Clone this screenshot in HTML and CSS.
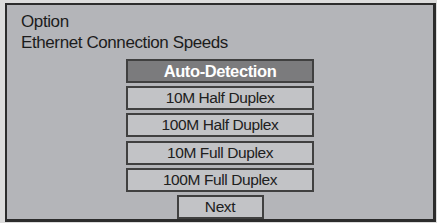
FILE: index.html
```html
<!DOCTYPE html>
<html lang="en">
<head>
    <meta charset="UTF-8">
    <title>Option - Ethernet Connection Speeds</title>
    <link rel="stylesheet" href="styles.css">
</head>
<body>
    <div class="panel">
        <div class="title">Option</div>
        <div class="title">Ethernet Connection Speeds</div>
        <div class="options">
            <div class="option selected">Auto-Detection</div>
            <div class="option">10M Half Duplex</div>
            <div class="option">100M Half Duplex</div>
            <div class="option">10M Full Duplex</div>
            <div class="option">100M Full Duplex</div>
            <div class="option next">Next</div>
        </div>
    </div>
</body>
</html>
```

FILE: styles.css
```css
body {
    margin: 0;
    padding: 3px 0 0 5px;
    background-color: #dcdcdc;
    font-family: "Liberation Sans", Arial, sans-serif;
}
.panel {
    box-sizing: border-box;
    width: 431px;
    height: 219px;
    padding: 6px 0 0 14px;
    background-color: #b4b5b9;
    border: 2px solid #2c2c2c;
    border-right-width: 3px;
    border-bottom-width: 3px;
}
.title {
    font-size: 17px;
    line-height: 21px;
    letter-spacing: -0.4px;
    color: #1c1c1c;
}
.options {
    display: flex;
    flex-direction: column;
    align-items: center;
    gap: 3.2px;
    margin: 6px 0 0 -14px;
}
.option {
    box-sizing: border-box;
    width: 188px;
    height: 24px;
    line-height: 20px;
    text-align: center;
    font-size: 15.5px;
    letter-spacing: -0.4px;
    color: #202020;
    background-color: #c2c3c6;
    border: 2px solid #404040;
}
.option.selected {
    background-color: #7b7b7d;
    color: #fff;
    font-weight: bold;
    font-size: 16.5px;
}
.option.next {
    width: 87px;
}
```
